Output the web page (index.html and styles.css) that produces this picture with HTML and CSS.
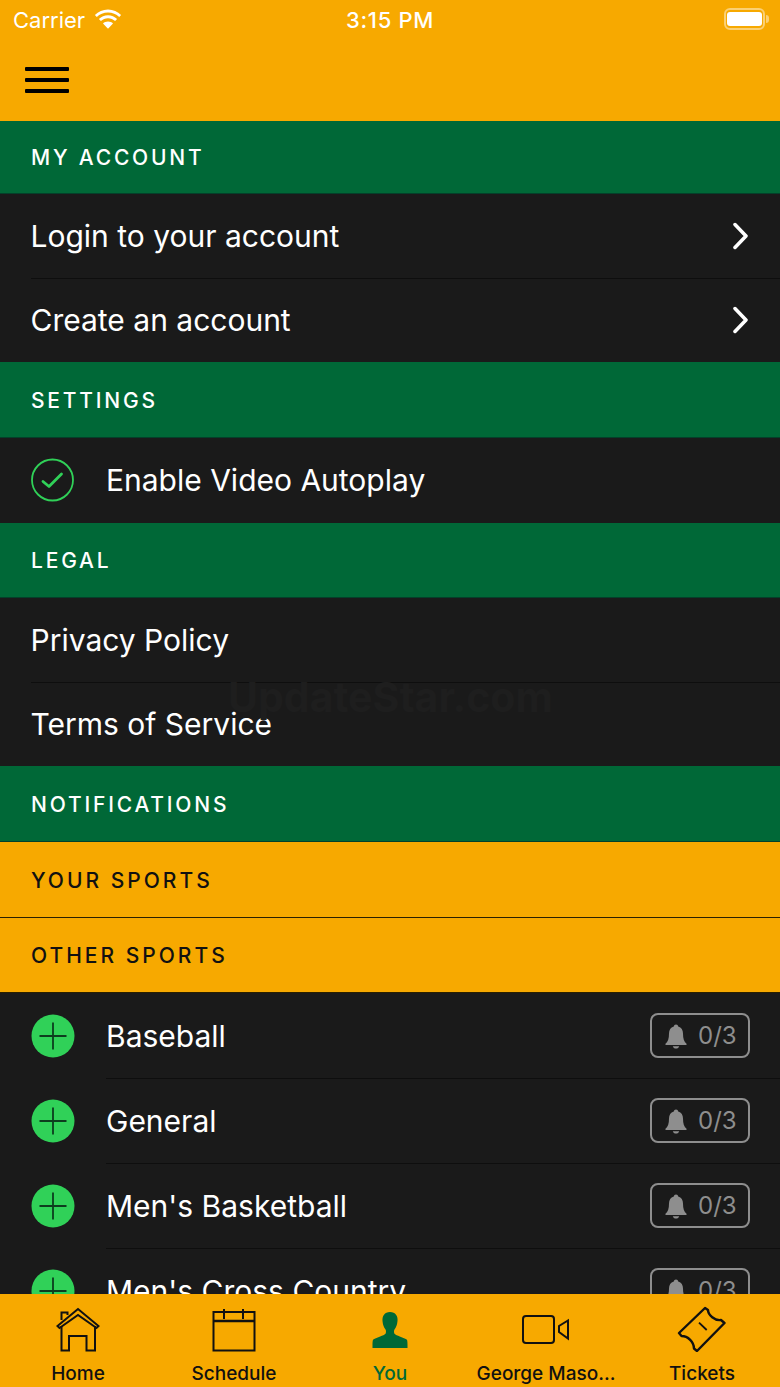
FILE: index.html
```html
<!DOCTYPE html>
<html lang="en">
<head>
    <meta charset="UTF-8">
    <meta name="viewport" content="width=device-width, initial-scale=1.0">
    <title>You</title>
    <link rel="stylesheet" href="styles.css">
</head>
<body>
    <div class="app">
        <!-- Top bar -->
        <header class="top-bar">
            <div class="status-bar">
                <div class="status-left">
                    <span>Carrier</span>
                    <svg class="wifi" width="30" height="22" viewBox="0 0 30 22">
                        <path d="M15 4.500c-4.400 0-8.300 1.700-11.200 4.500l-1.900-2.100c3.400-3.300 8-5.400 13.100-5.400s9.700 2.100 13.100 5.400l-1.900 2.100c-2.900-2.800-6.800-4.500-11.200-4.500z" fill="#fff"/>
                        <path d="M15 10.300c-2.800 0-5.200 1.100-7.100 2.800l-2-2.100c2.400-2.300 5.600-3.700 9.100-3.700s6.700 1.400 9.100 3.700l-2 2.100c-1.900-1.700-4.300-2.800-7.100-2.800z" fill="#fff"/>
                        <path d="M15 13.500c2 0 3.700.7 5 1.900L15 20.800l-5-5.400c1.300-1.200 3-1.900 5-1.900z" fill="#fff"/>
                    </svg>
                </div>
                <span class="status-time">3:15 PM</span>
                <div class="battery">
                    <div class="battery-body"><div class="battery-fill"></div></div>
                    <div class="battery-cap"></div>
                </div>
            </div>
            <div class="nav-bar">
                <div class="hamburger"><span></span><span></span><span></span></div>
            </div>
        </header>

        <main class="content">
            <div class="section-head section-top">MY ACCOUNT</div>
            <div class="row row-first">
                <span class="row-label">Login to your account</span>
                <svg class="chevron" width="18" height="28" viewBox="0 0 18 28"><path d="M2 2.500l11 11.500-11 11.500" fill="none" stroke="#fff" stroke-width="3.500" stroke-linecap="round" stroke-linejoin="round"/></svg>
            </div>
            <div class="row">
                <span class="row-label">Create an account</span>
                <svg class="chevron" width="18" height="28" viewBox="0 0 18 28"><path d="M2 2.500l11 11.500-11 11.500" fill="none" stroke="#fff" stroke-width="3.500" stroke-linecap="round" stroke-linejoin="round"/></svg>
            </div>

            <div class="section-head">SETTINGS</div>
            <div class="row row-first row-icon row-setting">
                <svg class="round-icon" width="44" height="44" viewBox="0 0 44 44">
                    <circle cx="21.500" cy="22" r="20.500" fill="none" stroke="#30d158" stroke-width="1.800"/>
                    <path d="M12 23.500l6 5L30.500 16" fill="none" stroke="#30d158" stroke-width="2.800" stroke-linecap="round" stroke-linejoin="round"/>
                </svg>
                <span class="row-label">Enable Video Autoplay</span>
            </div>

            <div class="section-head section-short">LEGAL</div>
            <div class="row row-first"><span class="row-label">Privacy Policy</span></div>
            <div class="row"><span class="row-label">Terms of Service</span></div>

            <div class="section-head">NOTIFICATIONS</div>
            <div class="section-head section-gold">YOUR SPORTS</div>
            <div class="section-head section-gold section-short">OTHER SPORTS</div>

            <div id="sports"></div>
        </main>

        <div class="watermark">UpdateStar.com</div>

        <!-- Tab bar -->
        <nav class="tab-bar">
            <div class="tab">
                <svg width="48" height="46" viewBox="0 0 48 46" fill="none" stroke="#111" stroke-width="2">
                    <path d="M3.500 20L24 3l20.500 17-2 2L24 9 5.500 22z"/>
                    <path d="M7.500 14V6.500h6V9"/>
                    <path d="M7.500 20v24.500H15V30h17.500v14.500H41V20"/>
                </svg>
                <span>Home</span>
            </div>
            <div class="tab">
                <svg width="46" height="46" viewBox="0 0 46 46" fill="none" stroke="#111" stroke-width="2">
                    <rect x="2.500" y="6" width="41" height="38.500"/>
                    <path d="M2.500 15h41" stroke-width="2.500"/>
                    <path d="M13 3v10M32 3v10"/>
                </svg>
                <span>Schedule</span>
            </div>
            <div class="tab tab-active">
                <svg width="46" height="46" viewBox="0 0 46 46">
                    <path d="M23 6c-5.500 0-8 4-7.500 9 .3 3.500 1.300 6.500 3 8.500 .6 .9 .7 3 0 4.300-2 2-8 3.500-12.500 6-.5 1.500-.5 4-.5 5.200v3h35v-3c0-1.200 0-3.700-.5-5.200-4.500-2.500-10.500-4-12.500-6-.7-1.300-.6-3.400 0-4.300 1.700-2 2.700-5 3-8.500 .5-5-2-9-7.500-9z" fill="#006837"/>
                </svg>
                <span>You</span>
            </div>
            <div class="tab">
                <svg width="48" height="46" viewBox="0 0 48 46" fill="none" stroke="#111" stroke-width="2">
                    <rect x="1" y="10" width="31" height="27" rx="3"/>
                    <path d="M46 14.500v18l-9-6.500v-6z"/>
                </svg>
                <span>George Maso...</span>
            </div>
            <div class="tab">
                <svg width="50" height="46" viewBox="0 0 50 46" fill="none" stroke="#111" stroke-width="2.400" stroke-linejoin="round">
                    <path d="M2 27L28 2l3 2c0 5 7 11 13 10l3.500 3L20 45l-3-2.500c0-6.500-6-12.500-12.500-12.500z"/>
                    <path d="M22 16.700l7.700 7.300" stroke-width="1.800"/>
                </svg>
                <span>Tickets</span>
            </div>
        </nav>
    </div>

    <script>
        // Sports list
        const sports = ['Baseball', 'General', "Men's Basketball", "Men's Cross Country"];
        const list = document.getElementById('sports');

        sports.forEach((name, i) => {
            const row = document.createElement('div');
            row.className = 'row row-icon' + (i === 0 ? ' row-first' : '');
            row.innerHTML = `
                <svg class="round-icon" width="44" height="44" viewBox="0 0 44 44">
                    <circle cx="22" cy="22" r="21.500" fill="#30d158"/>
                    <path d="M22 8.500v27M8.500 22h27" stroke="#0d3d1e" stroke-width="1.800"/>
                </svg>
                <span class="row-label">${name}</span>
                <div class="bell-badge">
                    <svg width="24" height="26" viewBox="0 0 24 26">
                        <path d="M12 1.500c-1.300 0-2 .8-2.200 1.900C6.500 4.400 5 7 5 10.500c0 5-1 8-3.500 10.200V22h21v-1.300C20 18.500 19 15.500 19 10.500c0-3.500-1.500-6.100-4.800-7.100C14 2.300 13.300 1.500 12 1.500z" fill="#8e8e8e"/>
                        <path d="M8.800 23.200h6.400c-.4 1.500-1.700 2.300-3.200 2.300s-2.800-.8-3.200-2.300z" fill="#8e8e8e"/>
                    </svg>
                    <span>0/3</span>
                </div>`;
            list.appendChild(row);
        });
    </script>
</body>
</html>
```

FILE: styles.css
```css
/* Base */
* {
    box-sizing: border-box;
}

body {
    margin: 0;
    font-family: Inter, "Liberation Sans", sans-serif;
    background-color: #1a1a1a;
    color: #fff;
}

.app {
    position: relative;
    display: flex;
    flex-direction: column;
    height: 100vh;
    overflow: hidden;
}

/* Top bar */
.top-bar {
    height: 121px;
    flex-shrink: 0;
    background-color: #f7a900;
}

.status-bar {
    position: relative;
    display: flex;
    justify-content: space-between;
    align-items: center;
    height: 40px;
    padding: 0 11px 0 13px;
    font-size: 22px;
    color: #fff;
}

.status-left {
    display: flex;
    align-items: center;
    gap: 8px;
}

.status-left .wifi {
    margin-top: -3px;
}

.status-time {
    position: absolute;
    left: 346px;
    top: 7px;
    font-weight: 500;
    letter-spacing: 0.7px;
}

.battery {
    display: flex;
    align-items: center;
    gap: 1px;
    margin-top: -2px;
}

.battery-body {
    width: 41px;
    height: 22px;
    padding: 2px 1px;
    border: 2px solid rgba(255, 255, 255, 0.45);
    border-radius: 6px;
}

.battery-fill {
    height: 100%;
    background-color: #fff;
    border-radius: 3px;
}

.battery-cap {
    width: 3px;
    height: 8px;
    background-color: rgba(255, 255, 255, 0.45);
    border-radius: 0 3px 3px 0;
}

.nav-bar {
    padding: 27px 25px 0;
}

.hamburger {
    display: flex;
    flex-direction: column;
    gap: 7px;
    width: 44px;
}

.hamburger span {
    height: 4px;
    background-color: #000;
    border-radius: 1px;
}

/* Sections */
.content {
    flex: 1;
    overflow: hidden;
}

.section-head {
    display: flex;
    align-items: center;
    height: 76px;
    padding: 1px 31px 0;
    background-color: #006837;
    border-bottom: 1px solid #04402a;
    font-size: 21px;
    font-weight: 500;
    letter-spacing: 2.8px;
    color: #fff;
}

.section-top {
    height: 73px;
}

.section-short {
    height: 75px;
}

.section-gold {
    background-color: #f7a900;
    border-bottom: 1px solid #2a2000;
    letter-spacing: 3px;
    color: #111;
}

/* Rows */
.row {
    position: relative;
    display: flex;
    align-items: center;
    height: 84px;
    padding: 0 30px 0 30.5px;
    background-color: #1a1a1a;
}

.row::before {
    content: "";
    position: absolute;
    top: 0;
    left: 31px;
    right: 0;
    height: 1px;
    background-color: #0e0e0e;
}

.row-first::before {
    display: none;
}

.row-label {
    flex: 1;
    font-size: 30px;
    color: #fff;
}

.chevron {
    margin-right: -1px;
}

.row-icon {
    height: 85px;
    gap: 31.5px;
}

.row-icon::before {
    left: 106px;
}

.row-setting {
    padding-bottom: 1px;
}

.round-icon {
    flex-shrink: 0;
}

.bell-badge {
    display: flex;
    align-items: center;
    gap: 10px;
    width: 100px;
    height: 45px;
    padding-left: 12px;
    border: 2px solid #8e8e8e;
    border-radius: 8px;
    font-size: 24px;
    color: #8e8e8e;
}

/* Faint mark over the list */
.watermark {
    position: absolute;
    top: 672px;
    left: 228px;
    font-size: 41px;
    font-weight: 700;
    color: #1e1e1e;
    pointer-events: none;
}

/* Tab bar */
.tab-bar {
    display: flex;
    height: 93px;
    flex-shrink: 0;
    background-color: #f7a900;
}

.tab {
    flex: 1;
    display: flex;
    flex-direction: column;
    align-items: center;
    padding-top: 12px;
    font-size: 19px;
    font-weight: 500;
    color: #111;
}

.tab svg {
    height: 46px;
    flex-shrink: 0;
}

.tab span {
    margin-top: 10px;
    white-space: nowrap;
}

.tab-active {
    color: #006837;
}
```
